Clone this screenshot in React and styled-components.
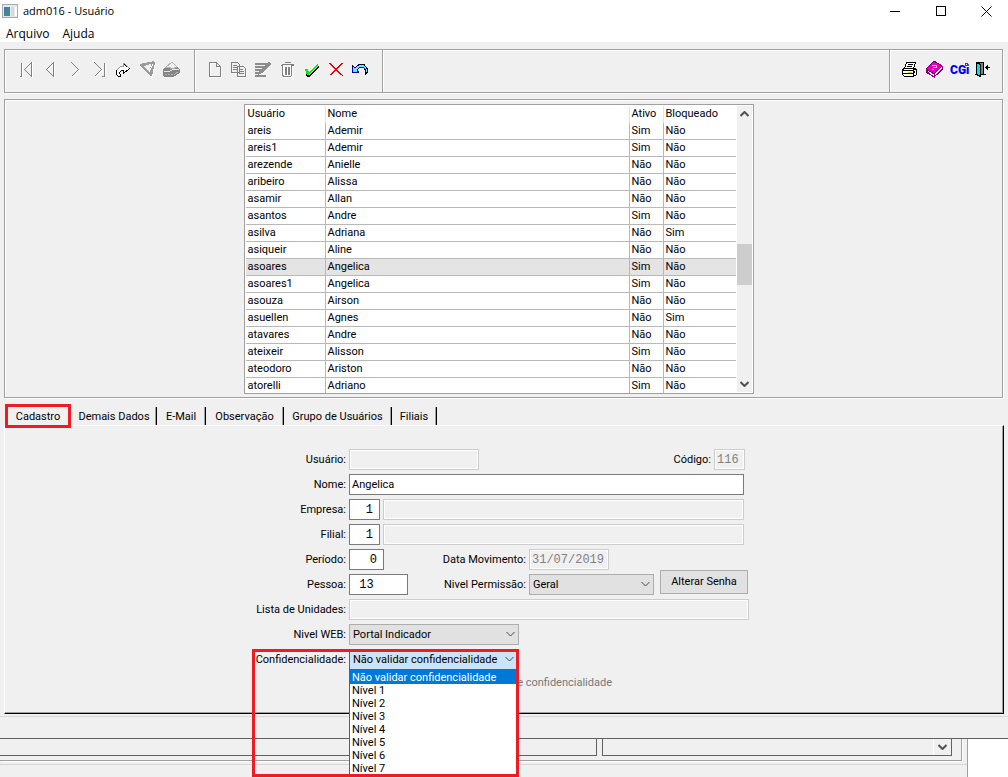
import React from "react";
import styled, { createGlobalStyle, css } from "styled-components";

const uiFont = `Roboto, "Liberation Sans", sans-serif`;
const titleFont = `"Open Sans", "Noto Sans", sans-serif`;
const monoFont = `"Liberation Mono", monospace`;
const face = "#f0f0f0";
const shade = "#a0a0a0";
const mark = "#ed1c24";

const GlobalStyle = createGlobalStyle`
  *, *::before, *::after { box-sizing: border-box; }
  body { margin: 0; background: #fff; color: #000; font: 11px/16px ${uiFont}; }
  button, input, select { font: inherit; color: inherit; margin: 0; }
`;

const Screen = styled.div`
  display: flex;
  flex-direction: column;
  min-height: 100vh;
  overflow: hidden;
`;
const AppWindow = styled.div`
  background: ${face};
  border-bottom: 1px solid #606060;
`;
const TitleBar = styled.header`
  display: flex;
  align-items: center;
  height: 22px;
  padding-left: 2px;
  background: #fff;
  font: 11px/16px ${titleFont};
`;
const Title = styled.h1`
  flex: 1;
  margin: 0 0 0 5px;
  font-size: 11px;
  font-weight: 400;
`;
const CaptionButton = styled.button`
  display: grid;
  place-items: center;
  width: 46px;
  height: 22px;
  padding: 0;
  border: 0;
  background: none;
  &:last-child { width: 44px; }
`;
const MenuBar = styled.nav`
  display: flex;
  align-items: flex-end;
  gap: 13px;
  height: 20px;
  padding-left: 6px;
  background: #fff;
`;
const MenuItem = styled.button`
  padding: 0;
  border: 0;
  background: none;
  font: 12px/16px ${titleFont};
`;
const Body = styled.main`
  padding: 7px 5px 0 4px;
`;
const etched = css`
  border: 1px solid ${shade};
  box-shadow: 1px 1px #fff, inset 1px 1px #fff;
`;
const Toolbar = styled.div`
  display: flex;
  height: 44px;
  ${etched}
`;
const ToolGroup = styled.div`
  display: flex;
  flex: ${(p) => (p.$grow ? "1" : "none")};
  align-items: center;
  justify-content: space-between;
  width: ${(p) => p.$width}px;
  padding: 0 10px 2px 9px;
  & + & {
    border-left: 1px solid ${shade};
    box-shadow: inset 1px 0 #fff;
    padding-left: 8px;
  }
  &:last-child { padding-right: 7px; }
`;
const ToolButton = styled.button`
  width: 24px;
  height: 24px;
  padding: 0;
  border: 0;
  background: none;
  svg { display: block; }
`;
const GridPanel = styled.section`
  display: flex;
  justify-content: center;
  margin-top: 6px;
  padding: 4px 10px 3px 0;
  ${etched}
`;
const GridFrame = styled.div`
  display: flex;
  width: 510px;
  height: 290px;
  padding: 1px;
  overflow: hidden;
  border: 1px solid ${shade};
  background: #fff;
`;
const Table = styled.table`
  flex: none;
  width: 490px;
  table-layout: fixed;
  border-collapse: separate;
  border-spacing: 0;
`;
const Th = styled.th`
  width: ${(p) => p.$width}px;
  height: 17px;
  padding: 0 2px;
  border-right: 1px solid #e3e3e3;
  font-weight: 400;
  line-height: 16px;
  text-align: left;
  vertical-align: top;
  &:last-child { border-right: 0; }
`;
const Td = styled.td`
  height: 17px;
  padding: 0 2px;
  border-right: 1px solid #b8b8b8;
  border-bottom: 1px solid #b8b8b8;
  line-height: 16px;
  white-space: nowrap;
  &:last-child { border-right: 0; }
`;
const Tr = styled.tr`
  background: ${(p) => (p.$selected ? "#e4e4e4" : "#fff")};
`;
const ScrollTrack = styled.div`
  display: flex;
  flex-direction: column;
  align-items: center;
  width: 16px;
  margin-left: 1px;
  background: ${face};
`;
const ScrollSpace = styled.div`
  flex: ${(p) => p.$share};
`;
const ScrollThumb = styled.div`
  width: 15px;
  height: 41px;
  background: #cdcdcd;
`;
const Tabs = styled.div`
  display: flex;
  height: 18px;
  margin-top: 9px;
`;
const Tab = styled.button`
  position: relative;
  width: ${(p) => p.$width}px;
  padding: 2px 0 0;
  border: 0;
  border-right: ${(p) => (p.$selected ? "0" : "1px solid #000")};
  box-shadow: ${(p) => (p.$selected ? "none" : `inset -1px 0 ${shade}`)};
  background: none;
  line-height: 16px;
  white-space: nowrap;
`;
const TabMark = styled.span`
  position: absolute;
  inset: -3px 1px -3px 1px;
  border: 3px solid ${mark};
`;
const Page = styled.section`
  display: flex;
  justify-content: center;
  margin-right: -1px;
  padding: 23px 0 18px;
  border-top: 1px solid #fff;
  border-left: 1px solid #fff;
  border-right: 1px solid #000;
  border-bottom: 1px solid #000;
  box-shadow: inset -1px -1px ${shade};
`;
const Form = styled.form`
  display: flex;
  flex-direction: column;
  gap: 4px;
  width: 504px;
`;
const Row = styled.div`
  position: relative;
  display: flex;
  align-items: flex-end;
  gap: 3px;
  height: 21px;
`;
const Label = styled.label`
  flex: none;
  width: ${(p) => p.$width || 94}px;
  line-height: 20px;
  text-align: right;
  white-space: nowrap;
`;
const Input = styled.input`
  flex: none;
  width: ${(p) => p.$width}px;
  height: 21px;
  padding: 0 ${(p) => (p.$right ? 6 : 2)}px;
  border: 1px solid #7a7a7a;
  border-radius: 0;
  background: #fff;
  text-align: ${(p) => (p.$right ? "right" : "left")};
  font: ${(p) => (p.$mono ? `12px/17px ${monoFont}` : `11px/17px ${uiFont}`)};
  &:disabled {
    border-color: #ccc;
    background: ${face};
    box-shadow: inset 0 0 0 1px #fff;
    color: #808080;
  }
`;
const SelectBox = styled.span`
  position: relative;
  flex: none;
  width: ${(p) => p.$width}px;
  height: 21px;
  svg { position: absolute; right: 4px; top: 7px; pointer-events: none; }
`;
const Select = styled.select`
  appearance: none;
  display: block;
  width: 100%;
  height: 21px;
  padding: 0 3px;
  border: 1px solid ${(p) => (p.$open ? "#0078d7" : "#adadad")};
  border-radius: 0;
  background: ${(p) => (p.$open ? "#cce4f7" : "#e1e1e1")};
  line-height: 16px;
`;
const PushButton = styled.button`
  flex: none;
  width: 88px;
  height: 24px;
  margin: 0 0 1px 3px;
  padding: 0;
  border: 1px solid #adadad;
  background: #e1e1e1;
`;
const Note = styled.span`
  width: 360px;
  height: 21px;
  line-height: 18px;
  text-align: right;
  color: #787878;
`;
const Highlight = styled.div`
  position: absolute;
  z-index: 3;
  left: 0;
  top: 0;
  width: 267px;
  height: 128px;
  border: 3px solid ${mark};
  pointer-events: none;
`;
const List = styled.ul`
  position: absolute;
  z-index: 2;
  left: 97px;
  top: 21px;
  width: 168px;
  height: 105px;
  margin: 0;
  padding: 0;
  overflow: hidden;
  border: 1px solid #0078d7;
  background: #fff;
  list-style: none;
`;
const Option = styled.li`
  height: 13px;
  padding-left: 2px;
  line-height: 14px;
  background: ${(p) => (p.$selected ? "#0078d7" : "#fff")};
  color: ${(p) => (p.$selected ? "#fff" : "#000")};
`;
const StatusBar = styled.footer`
  height: 22px;
  margin-top: 2px;
  border-top: 1px solid #d7d7d7;
`;
const Backdrop = styled.div`
  display: flex;
  flex: 1;
  min-height: 38px;
`;
const BackWindow = styled.div`
  flex: 1;
  border-right: 1px solid ${shade};
  background: ${face};
`;
const BackPanel = styled.div`
  display: flex;
  gap: 5px;
  height: 22px;
  margin-right: 5px;
  padding: 0 9px 4px 0;
  border-right: 1px solid ${shade};
  border-bottom: 1px solid ${shade};
  box-shadow: 1px 1px #fff;
`;
const BackField = styled.div`
  display: flex;
  flex: ${(p) => p.$share};
  justify-content: flex-end;
  border: solid #606060;
  border-width: 0 1px 1px ${(p) => (p.$closed ? 1 : 0)}px;
`;
const BackScroll = styled.div`
  display: grid;
  place-items: center;
  width: 18px;
  border-left: 1px solid #fff;
`;
const BackStatus = styled.div`
  height: 12px;
  margin-top: 3px;
  border-top: 1px solid #d7d7d7;
`;
const Desk = styled.div`
  width: 40px;
  background: #fff;
`;

function Icon({ children }) {
  return (
    <svg width="24" height="24" viewBox="0 0 24 24" fill="none" stroke="#808080" shapeRendering="crispEdges" aria-hidden="true">
      {children}
    </svg>
  );
}
/* Disabled glyphs carry a white copy one pixel down and right. */
function Embossed({ d, fill = "none", width = 1 }) {
  return (
    <Icon>
      <path d={d} stroke="#fff" strokeWidth={width} transform="translate(1 1)" />
      <path d={d} fill={fill} strokeWidth={width} />
    </Icon>
  );
}
function Chevron({ up, weight = 1, color = "#444" }) {
  return (
    <svg width="9" height="6" viewBox="0 0 9 6" fill="none" stroke={color} strokeWidth={weight} aria-hidden="true">
      <path d={up ? "M.5 5 4.5 1l4 4" : "M.5 1l4 4 4-4"} />
    </svg>
  );
}

const navTools = [
  ["Primeiro", <Embossed d="M5.5 18.5h2v-14M17.5 4.5v14M17.5 4.5l-7 7 7 7" />],
  ["Anterior", <Embossed d="M15.5 4.5v14l-7-7z" />],
  ["Próximo", <Embossed d="M8.5 4.5l7 7-7 7" />],
  ["Último", <Embossed d="M7.5 4.5l7 7-7 7M15 18.5h2.5v-14" />],
  ["Ir para", (
    <Icon>
      <path d="M12.5 5.5v3h-3l-4 4v4l2 2h2v-2l-1-1v-1l2-2h2v3l6-5z" fill="#fff" stroke="#000" />
      <path d="M12.5 5v3.5h-3l-4 4M13 5l5 5" stroke="#999" />
    </Icon>
  )],
  ["Filtrar", (
    <Icon>
      <path d="M5 7l14-4-3 16h-2z" fill="#fff" stroke="none" transform="translate(1 1)" />
      <path d="M4 6l14-3 1 2-3 13h-2L4 8z" fill="#9b9b9b" stroke="none" />
      <path d="M8 8l7-2-1 6-2 1z" fill={face} stroke="none" />
      <path d="M13 14l4-8" stroke="#fff" />
    </Icon>
  )],
  ["Localizar", (
    <Icon>
      <path d="M3 11l9-7 8 7v4l-7 4H4l-1-3z" fill="#858585" stroke="none" />
      <path d="M6 9l6-5 5 5-5 2-3-2z" fill={face} stroke="#b0b0b0" />
      <path d="M4 13.5h5l4-2h6" stroke="#e8e8e8" />
      <path d="M5 16.5h9l5-3" stroke="#b4b4b4" strokeDasharray="2 1" />
    </Icon>
  )],
];
const editTools = [
  ["Novo", <Embossed d="M6.5 4.5h7l4 4v10h-11zM13.5 4.5v4h4" />],
  ["Copiar", <Embossed d="M4.5 4.5h6l2 2v8h-8zM6 7.5h4M6 9.5h5M6 11.5h5M10.5 8.5h6l2 2v8h-8zM12 11.5h4M12 13.5h5M12 15.5h5" fill={face} />],
  ["Editar", (
    <Icon>
      <path d="M4 6h13M4 9h9M4 12h7M4 15h5M4 18h11" stroke="#8c8c8c" strokeWidth="2" />
      <path d="M18 4l2 2-9 9-4 2 1-4z" fill="#8c8c8c" stroke="none" />
      <path d="M10 17l9-9" stroke="#fff" />
    </Icon>
  )],
  ["Excluir", (
    <Icon>
      <path d="M7 8h11v10l-2 2H9l-2-2z" fill="#fff" stroke="none" />
      <path d="M6.5 6.5h12M9.5 4.5h6M5.5 7.5h2v10l2 1h6l1-1v-10h2" />
      <path d="M10.5 9v8M14 9v8" strokeWidth="2" />
    </Icon>
  )],
  ["Confirmar", (
    <Icon>
      <path d="M6 12l3 5L19 7v2L9 19H7l-1-3z" fill="#000" stroke="none" />
      <path d="M5 11h3l1 4L18 5v2L9 17H7z" fill="#00f000" stroke="none" />
    </Icon>
  )],
  ["Cancelar", (
    <Icon>
      <path d="M7 6l12 12" stroke="#600" />
      <path d="M5.5 5.5l12 12M6.5 5.5l12 12M17.5 5.5l-12 12M18.5 5.5l-12 12" stroke="#f00000" />
    </Icon>
  )],
  ["Desfazer", (
    <Icon>
      <path d="M4.5 7.5v7h6l-2-3 3-3h3l2 2v3h2v-3l-3-4h-4l-4 3z" fill="#60e8ff" stroke="none" />
      <path d="M4.5 7v7.5H11M5 8l2 2 4-3.5h5l3 4v4l-2 2v-5l-2-2.500h-3l-3 3 2 3" stroke="#0000a0" />
      <path d="M11 6.500h5l3 4v4l-2 2" stroke="#000" />
    </Icon>
  )],
];
const appTools = [
  ["Imprimir", (
    <Icon>
      <path d="M8.500 4.500h9l-2 6h-9z" fill="#fff" stroke="#000" />
      <path d="M6.500 10.500h-1l-1 2v4l2 2h9l3-2v-5l-2-1" fill="#fff" stroke="#000" />
      <path d="M5 12.500h10l2-2M5 15.500h10l2-2M15.500 12v6M10 6.500h5M9 8.500h5" stroke="#000" />
      <path d="M10 14h4" stroke="#d8d800" />
    </Icon>
  )],
  ["Manual", (
    <Icon>
      <path d="M5 12v2l7 5 8-7v-4" fill="#fff" stroke="#600060" />
      <path d="M4 11l8-8 8 5-8 8z" fill="#e000c0" stroke="#700070" />
      <path d="M4 11v3l8 5v-3M20 8v3l-8 8" stroke="#900070" />
      <path d="M10 7.500h4v2h-3M10 11h2" stroke="#ffe000" />
    </Icon>
  )],
  ["CGI", (
    <Icon>
      <text x="3" y="16" fill="#0000f0" stroke="none" fontFamily="Roboto, 'Liberation Sans', sans-serif" fontSize="12" fontWeight="900">CGi</text>
      <path d="M18 5h3v3h-3z" fill="#f00000" stroke="none" />
      <path d="M19 6h1v1h-1z" fill="#fff" stroke="none" />
    </Icon>
  )],
  ["Sair", (
    <Icon>
      <path d="M5.500 4.500h7v12h-7z" fill="#808080" stroke="#000" />
      <path d="M5.500 4.500l4 2v12l-4-2z" fill="#00e0e8" stroke="#000" />
      <path d="M4 16.500h2M12 16.500h3M14 9.500h5M16.500 7v5" stroke="#000" />
      <path d="M14 9.500l2-2v4z" fill="#000" stroke="none" />
    </Icon>
  )],
];
const users = [
  ["areis", "Ademir", "Sim", "Não"],
  ["areis1", "Ademir", "Sim", "Não"],
  ["arezende", "Anielle", "Não", "Não"],
  ["aribeiro", "Alissa", "Não", "Não"],
  ["asamir", "Allan", "Não", "Não"],
  ["asantos", "Andre", "Sim", "Não"],
  ["asilva", "Adriana", "Não", "Sim"],
  ["asiqueir", "Aline", "Não", "Não"],
  ["asoares", "Angelica", "Sim", "Não"],
  ["asoares1", "Angelica", "Sim", "Não"],
  ["asouza", "Airson", "Não", "Não"],
  ["asuellen", "Agnes", "Não", "Sim"],
  ["atavares", "Andre", "Não", "Não"],
  ["ateixeir", "Alisson", "Sim", "Não"],
  ["ateodoro", "Ariston", "Não", "Não"],
  ["atorelli", "Adriano", "Sim", "Não"],
];
const columns = [["Usuário", 80], ["Nome", 304], ["Ativo", 34], ["Bloqueado", 72]];
const tabs = [["Demais Dados", 85], ["E-Mail", 49], ["Observação", 78], ["Grupo de Usuários", 108], ["Filiais", 45]];
const levels = ["Não validar confidencialidade", "Nível 1", "Nível 2", "Nível 3", "Nível 4", "Nível 5", "Nível 6", "Nível 7"];

function Tools({ items, width }) {
  return (
    <ToolGroup $width={width}>
      {items.map(([name, icon]) => (
        <ToolButton key={name} type="button" aria-label={name}>{icon}</ToolButton>
      ))}
    </ToolGroup>
  );
}
function Field({ id, label, labelWidth, ...rest }) {
  return (
    <>
      <Label htmlFor={id} $width={labelWidth}>{label}</Label>
      <Input id={id} {...rest} />
    </>
  );
}
function Combo({ id, label, labelWidth, width, value, open }) {
  return (
    <>
      <Label htmlFor={id} $width={labelWidth}>{label}</Label>
      <SelectBox $width={width}>
        <Select id={id} $open={open} defaultValue={value}>
          <option>{value}</option>
        </Select>
        <Chevron />
      </SelectBox>
    </>
  );
}

export default function App() {
  return (
    <Screen>
      <GlobalStyle />
      <AppWindow>
        <TitleBar>
          <svg width="16" height="14" viewBox="0 0 16 14" shapeRendering="crispEdges" aria-hidden="true">
            <path d="M.5.5h15v13H.5z" fill="#e8e8ec" stroke="#a8a8b0" />
            <path d="M2 3h6v9H2z" fill="#3c8c88" />
            <path d="M2 3h3v5H2z" fill="#4c78b0" />
            <path d="M9 3h3v9H9z" fill="#d0dce0" />
            <path d="M13 3h2v9h-2z" fill="#fff" />
          </svg>
          <Title>adm016 - Usuário</Title>
          <CaptionButton type="button" aria-label="Minimizar">
            <svg width="11" height="11" stroke="#000" shapeRendering="crispEdges"><path d="M0 5.5h10" /></svg>
          </CaptionButton>
          <CaptionButton type="button" aria-label="Maximizar">
            <svg width="11" height="11" stroke="#000" fill="none" shapeRendering="crispEdges"><path d="M.5.5h9v9h-9z" /></svg>
          </CaptionButton>
          <CaptionButton type="button" aria-label="Fechar">
            <svg width="11" height="11" stroke="#000"><path d="M.5.5l10 10M10.5.5l-10 10" /></svg>
          </CaptionButton>
        </TitleBar>
        <MenuBar>
          <MenuItem type="button">Arquivo</MenuItem>
          <MenuItem type="button">Ajuda</MenuItem>
        </MenuBar>
        <Body>
          <Toolbar>
            <Tools items={navTools} width={189} />
            <Tools items={editTools} width={188} />
            <ToolGroup $grow />
            <Tools items={appTools} width={113} />
          </Toolbar>

          <GridPanel>
            <GridFrame>
              <Table>
                <thead>
                  <tr>{columns.map(([name, width]) => <Th key={name} $width={width}>{name}</Th>)}</tr>
                </thead>
                <tbody>
                  {users.map((user) => (
                    <Tr key={user[0]} $selected={user[0] === "asoares"}>
                      {user.map((value, i) => <Td key={i}>{value}</Td>)}
                    </Tr>
                  ))}
                </tbody>
              </Table>
              <ScrollTrack>
                <ScrollSpace $share={136}><Chevron up weight={2} color="#505050" /></ScrollSpace>
                <ScrollThumb />
                <ScrollSpace $share={94} />
                <Chevron weight={2} color="#505050" />
                <ScrollSpace $share={5} />
              </ScrollTrack>
            </GridFrame>
          </GridPanel>

          <Tabs role="tablist">
            <Tab type="button" role="tab" aria-selected="true" $selected $width={68}>
              Cadastro
              <TabMark />
            </Tab>
            {tabs.map(([name, width]) => (
              <Tab key={name} type="button" role="tab" aria-selected="false" $width={width}>{name}</Tab>
            ))}
          </Tabs>

          <Page role="tabpanel">
            <Form onSubmit={(e) => e.preventDefault()}>
              <Row>
                <Field id="usuario" label="Usuário:" $width={130} disabled />
                <Field id="codigo" label="Código:" labelWidth={229} $width={31} $mono disabled defaultValue="116" />
              </Row>
              <Row>
                <Field id="nome" label="Nome:" $width={395} defaultValue="Angelica" />
              </Row>
              <Row>
                <Field id="empresa" label="Empresa:" $width={31} $mono $right defaultValue="1" />
                <Input aria-label="Nome da empresa" $width={361} disabled />
              </Row>
              <Row>
                <Field id="filial" label="Filial:" $width={31} $mono $right defaultValue="1" />
                <Input aria-label="Nome da filial" $width={361} disabled />
              </Row>
              <Row>
                <Field id="periodo" label="Período:" $width={35} $mono $right defaultValue="0" />
                <Field id="data" label="Data Movimento:" labelWidth={139} $width={80} $mono disabled defaultValue="31/07/2019" />
              </Row>
              <Row>
                <Field id="pessoa" label="Pessoa:" $width={59} $mono defaultValue=" 13" />
                <Combo id="permissao" label="Nivel Permissão:" labelWidth={115} width={125} value="Geral" />
                <PushButton type="button">Alterar Senha</PushButton>
              </Row>
              <Row>
                <Field id="unidades" label="Lista de Unidades:" $width={400} disabled />
              </Row>
              <Row>
                <Combo id="web" label="Nivel WEB:" width={170} value="Portal Indicador" />
              </Row>
              <Row>
                <Combo id="confidencialidade" label="Confidencialidade:" width={169} value={levels[0]} open />
                <List role="listbox" aria-label="Confidencialidade">
                  {levels.map((level, i) => (
                    <Option key={level} role="option" aria-selected={i === 0} $selected={i === 0}>{level}</Option>
                  ))}
                </List>
                <Highlight />
              </Row>
              <Row>
                <Note>de confidencialidade</Note>
              </Row>
            </Form>
          </Page>
        </Body>
        <StatusBar />
      </AppWindow>
      <Backdrop>
        <BackWindow>
          <BackPanel>
            <BackField $share={597} />
            <BackField $share={348} $closed>
              <BackScroll><Chevron weight={2} color="#505050" /></BackScroll>
            </BackField>
          </BackPanel>
          <BackStatus />
        </BackWindow>
        <Desk />
      </Backdrop>
    </Screen>
  );
}
